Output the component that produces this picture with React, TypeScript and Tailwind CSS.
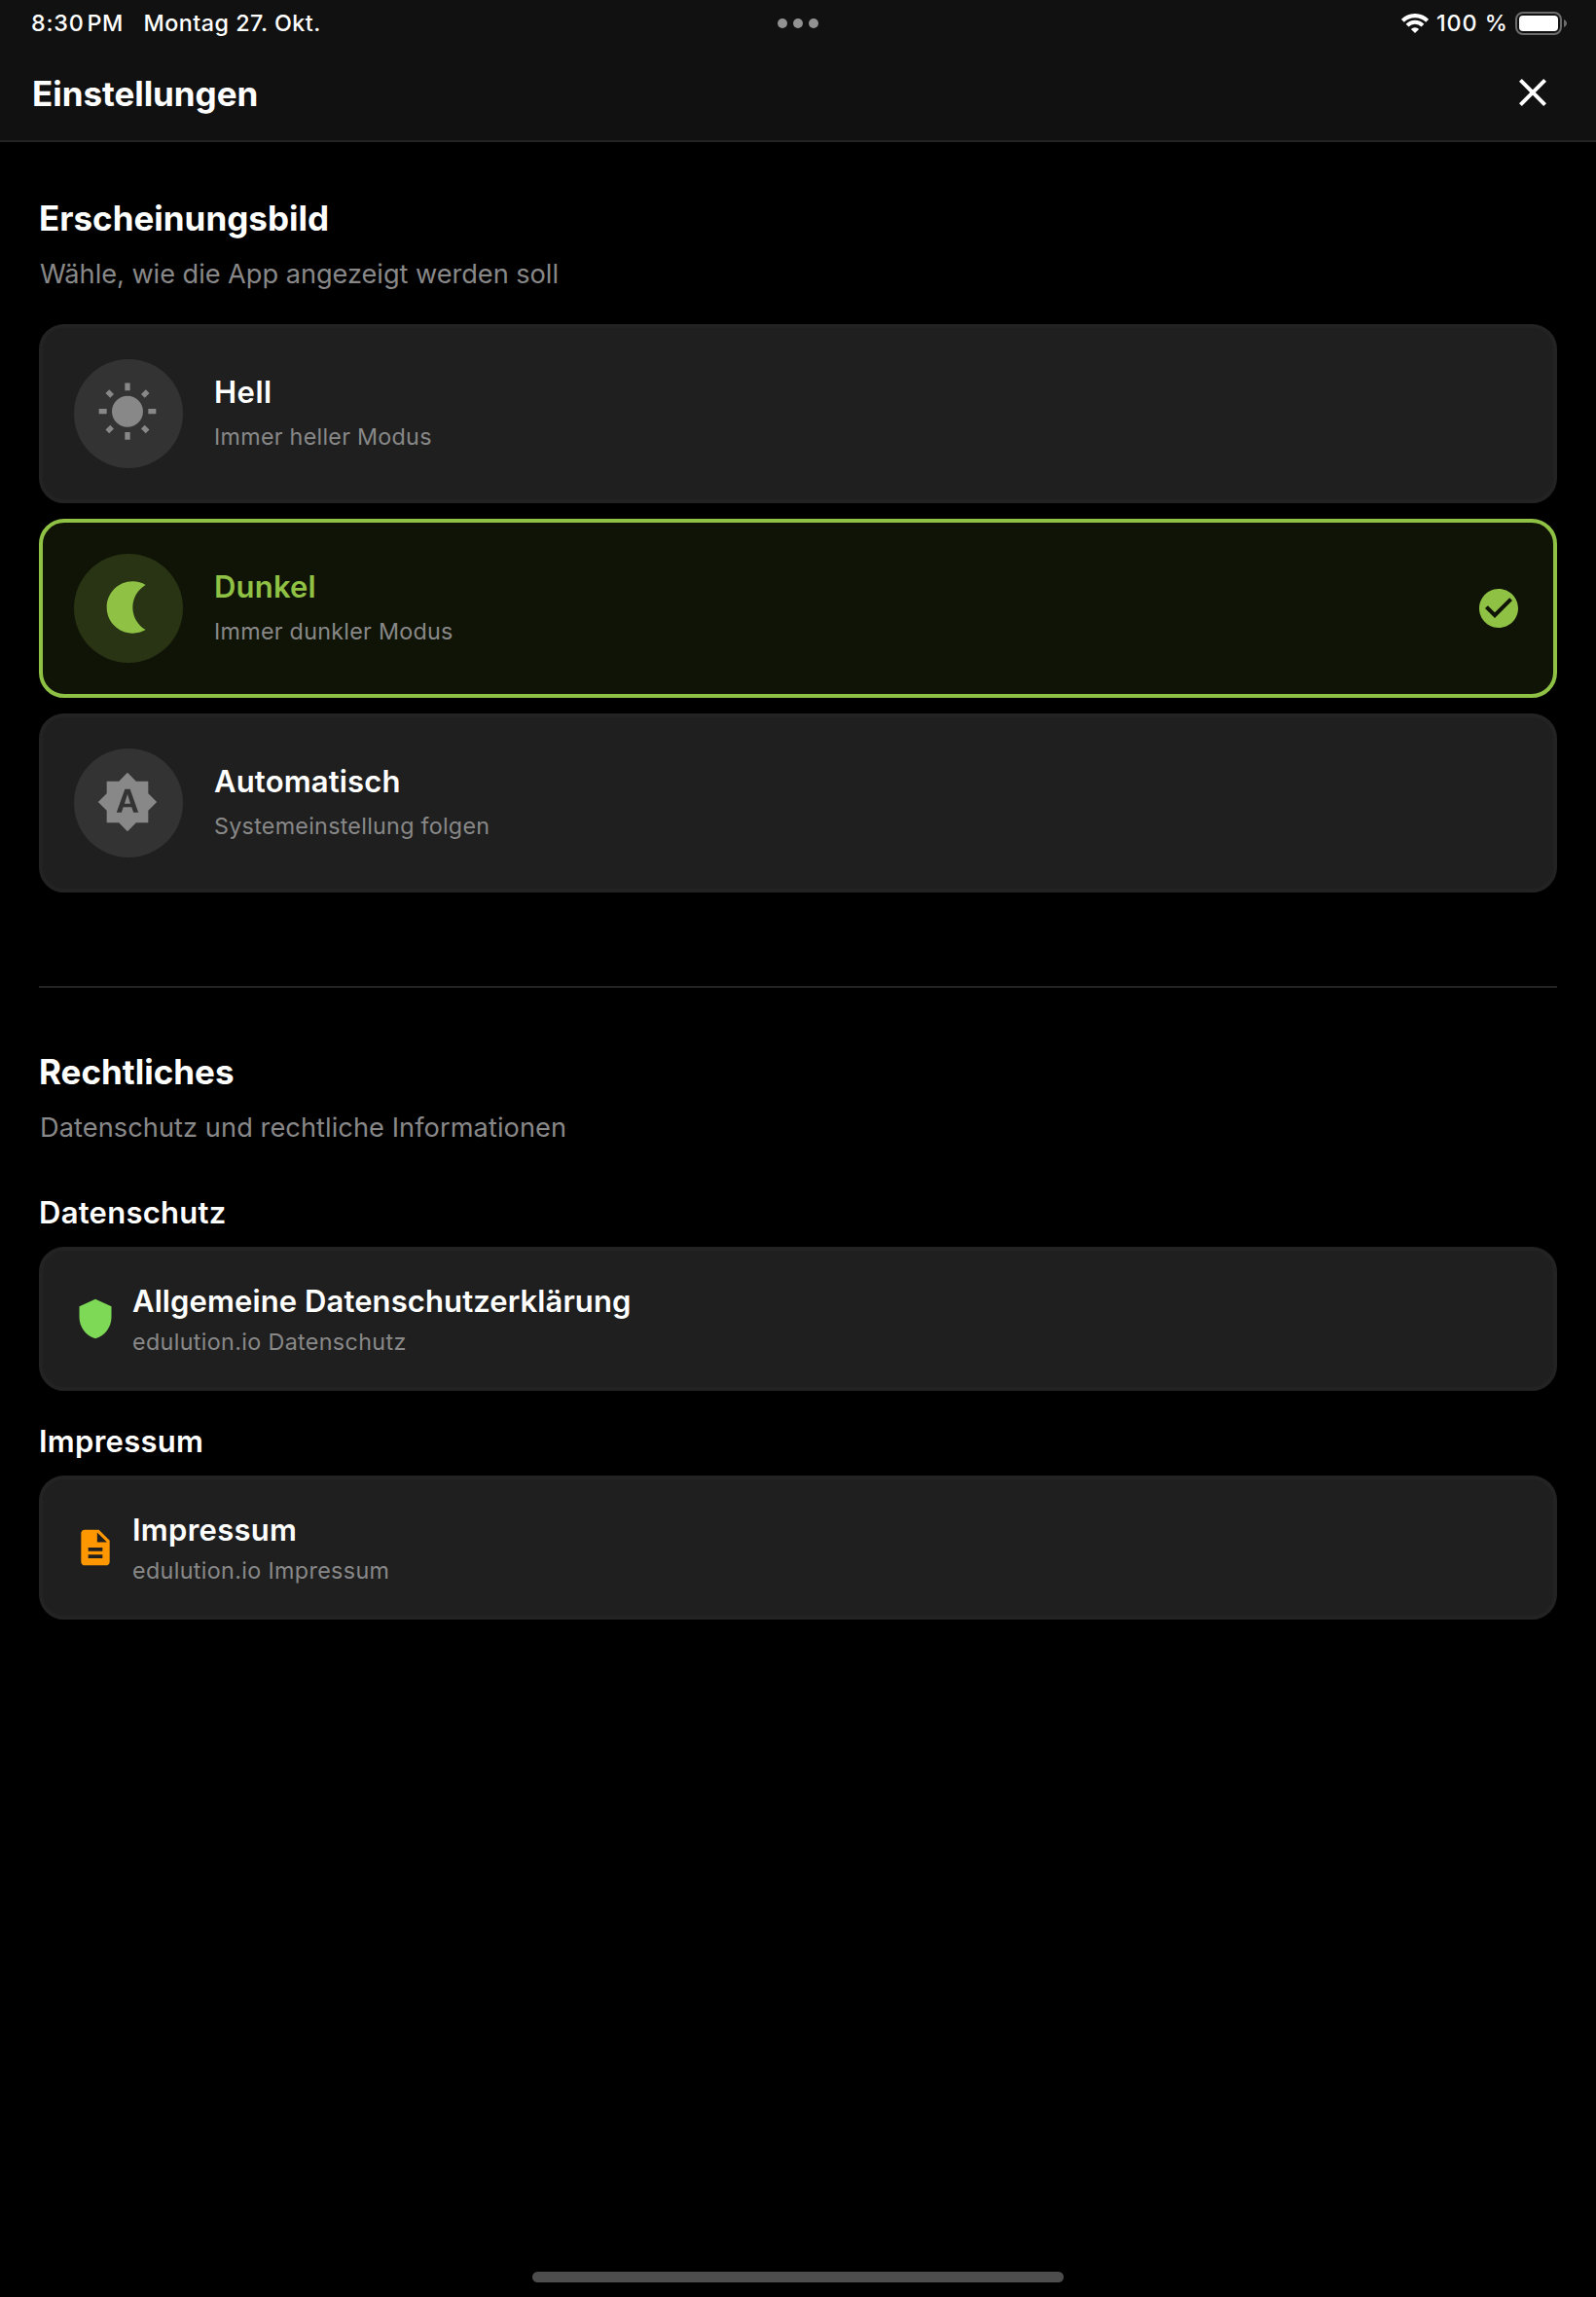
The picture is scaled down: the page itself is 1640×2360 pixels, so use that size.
import React from "react";
import { MdBrightnessAuto, MdCheckCircle, MdClose, MdDescription, MdWbSunny } from "react-icons/md";

type IconType = React.ComponentType<{ className?: string }>;

function MoonIcon({ className }: { className?: string }) {
  return (
    <svg viewBox="0 0 24 24" fill="currentColor" className={className}>
      <path d="M14 2c1.82 0 3.53.5 5 1.35-2.99 1.73-5 4.95-5 8.65s2.01 6.92 5 8.65A9.973 9.973 0 0 1 14 22C8.48 22 4 17.52 4 12S8.48 2 14 2z" />
    </svg>
  );
}

function ShieldIcon({ className }: { className?: string }) {
  return (
    <svg viewBox="0 0 24 24" fill="currentColor" className={className}>
      <path d="M12 1L3 5v6c0 5.55 3.84 10.74 9 12 5.16-1.26 9-6.45 9-12V5l-9-4z" />
    </svg>
  );
}

function StatusBar() {
  return (
    <div className="grid h-12 grid-cols-3 items-center pr-[30px] pl-8 text-[23.3px] leading-[47px] font-medium text-white">
      <div className="flex h-[47px] self-start whitespace-nowrap">
        <span className="tracking-[0.8px]">8:30</span>
        <span className="ml-[3px] tracking-[0.35px]">PM</span>
        <span className="ml-[21px] tracking-[0.49px]">Montag 27. Okt.</span>
      </div>
      <div className="flex items-center justify-center gap-1.5 pr-0.5">
        <span className="size-2.5 rounded-full bg-[#929292]" />
        <span className="size-2.5 rounded-full bg-[#929292]" />
        <span className="size-2.5 rounded-full bg-[#929292]" />
      </div>
      <div className="flex h-[47px] items-center justify-end self-start whitespace-nowrap">
        <svg viewBox="0 0 28 20" className="mt-px h-5 w-7" fill="none" stroke="#fff">
          <path d="M1.34 7.34A17.9 17.9 0 0 1 26.66 7.34" strokeWidth="4.2" />
          <path d="M6.08 12.08A11.2 11.2 0 0 1 21.92 12.08" strokeWidth="4" />
          <path d="M14 20L9.9 15.9A5.8 5.8 0 0 1 18.1 15.9Z" fill="#fff" stroke="none" />
        </svg>
        <span className="ml-2 w-[72px] tracking-[0.95px]">100 %</span>
        <div className="mt-px ml-[9px] h-6 w-12 rounded-[8px] border-2 border-[#6c6c6c] p-0.5">
          <div className="h-full rounded-[4px] bg-white" />
        </div>
        <svg viewBox="0 0 3 8" className="mt-px ml-0.5 h-2 w-[3px]">
          <path d="M0 0C2 .8 3 2.3 3 4S2 7.2 0 8Z" fill="#6c6c6c" />
        </svg>
      </div>
    </div>
  );
}

function SectionHeading({ title, subtitle, spacing }: { title: string; subtitle: string; spacing: string }) {
  return (
    <div>
      <h2 className="text-[35px] leading-[44px] font-bold text-white">{title}</h2>
      <p className={`mt-[19px] pl-px text-[27.2px] leading-[34px] text-[#888] ${spacing}`}>{subtitle}</p>
    </div>
  );
}

function ThemeOption({
  icon: Icon,
  title,
  subtitle,
  spacing,
  selected = false,
}: {
  icon: IconType;
  title: string;
  subtitle: string;
  spacing: string;
  selected?: boolean;
}) {
  return (
    <button
      type="button"
      className={`flex h-[184px] w-full items-center rounded-[26px] border-4 px-8 text-left ${
        selected ? "border-[#8fc145] bg-[#101407]" : "border-[#232323] bg-[#1f1f1f]"
      }`}
    >
      <span
        className={`flex size-28 items-center justify-center rounded-full pr-0.5 pb-0.5 ${
          selected ? "bg-[#283414] text-[#8fc145]" : "bg-[#333] text-[#888]"
        }`}
      >
        <Icon className="size-16" />
      </span>
      <span className="ml-8 flex flex-1 flex-col gap-[11px]">
        <span className={`text-[31px] leading-9 font-semibold ${spacing} ${selected ? "text-[#8fc145]" : "text-white"}`}>
          {title}
        </span>
        <span className="text-[23.3px] leading-[34px] tracking-[0.27px] text-[#888]">{subtitle}</span>
      </span>
      {selected && <MdCheckCircle className="size-12 text-[#8fc145]" />}
    </button>
  );
}

function LegalLink({
  icon: Icon,
  color,
  title,
  subtitle,
  spacing,
}: {
  icon: IconType;
  color: string;
  title: string;
  subtitle: string;
  spacing: string;
}) {
  return (
    <button
      type="button"
      className="mt-4 flex h-[148px] w-full items-center rounded-[26px] border-4 border-[#232323] bg-[#1f1f1f] px-8 text-left"
    >
      <Icon className={`size-11 ${color}`} />
      <span className="ml-4 flex flex-col gap-[7px]">
        <span className={`text-[31px] leading-10 font-semibold text-white ${spacing}`}>{title}</span>
        <span className="text-[23.3px] leading-[30px] tracking-[0.35px] text-[#888]">{subtitle}</span>
      </span>
    </button>
  );
}

export default function App() {
  return (
    <div className="flex h-[2360px] w-[1640px] flex-col bg-black font-['Inter',sans-serif] antialiased">
      <header className="h-[146px] border-b-2 border-[#232323] bg-[#111]">
        <StatusBar />
        <div className="flex h-24 items-center justify-between pr-[41px] pl-[33px]">
          <h1 className="text-[35px] leading-[44px] font-bold tracking-[-0.04px] text-white">Einstellungen</h1>
          <button type="button" aria-label="Schließen" className="mb-0.5 text-white">
            <MdClose className="size-12" />
          </button>
        </div>
      </header>

      <main className="flex-1 px-10 pt-14">
        <section>
          <SectionHeading
            title="Erscheinungsbild"
            subtitle="Wähle, wie die App angezeigt werden soll"
            spacing="tracking-[-0.04px]"
          />
          <div className="mt-[34px] flex flex-col gap-4">
            <ThemeOption icon={MdWbSunny} title="Hell" subtitle="Immer heller Modus" spacing="tracking-[0.5px]" />
            <ThemeOption icon={MoonIcon} title="Dunkel" subtitle="Immer dunkler Modus" spacing="tracking-[0.2px]" selected />
            <ThemeOption
              icon={MdBrightnessAuto}
              title="Automatisch"
              subtitle="Systemeinstellung folgen"
              spacing="tracking-[0.15px]"
            />
          </div>
        </section>

        <section className="mt-24 border-t-2 border-[#232323] pt-16">
          <SectionHeading
            title="Rechtliches"
            subtitle="Datenschutz und rechtliche Informationen"
            spacing="tracking-[0.07px]"
          />
          <h3 className="mt-[51px] text-[31px] leading-[38px] font-semibold tracking-[0.26px] text-white">Datenschutz</h3>
          <LegalLink
            icon={ShieldIcon}
            color="text-[#7ed957]"
            title="Allgemeine Datenschutzerklärung"
            subtitle="edulution.io Datenschutz"
            spacing="tracking-[0.1px]"
          />
          <h3 className="mt-[33px] text-[31px] leading-[38px] font-semibold tracking-[0.28px] text-white">Impressum</h3>
          <LegalLink
            icon={MdDescription}
            color="text-[#ff9800]"
            title="Impressum"
            subtitle="edulution.io Impressum"
            spacing="tracking-[0.28px]"
          />
        </section>
      </main>

      <div className="mx-auto mb-[15px] h-[11px] w-[546px] rounded-full bg-[#4d4d4d]" />
    </div>
  );
}
